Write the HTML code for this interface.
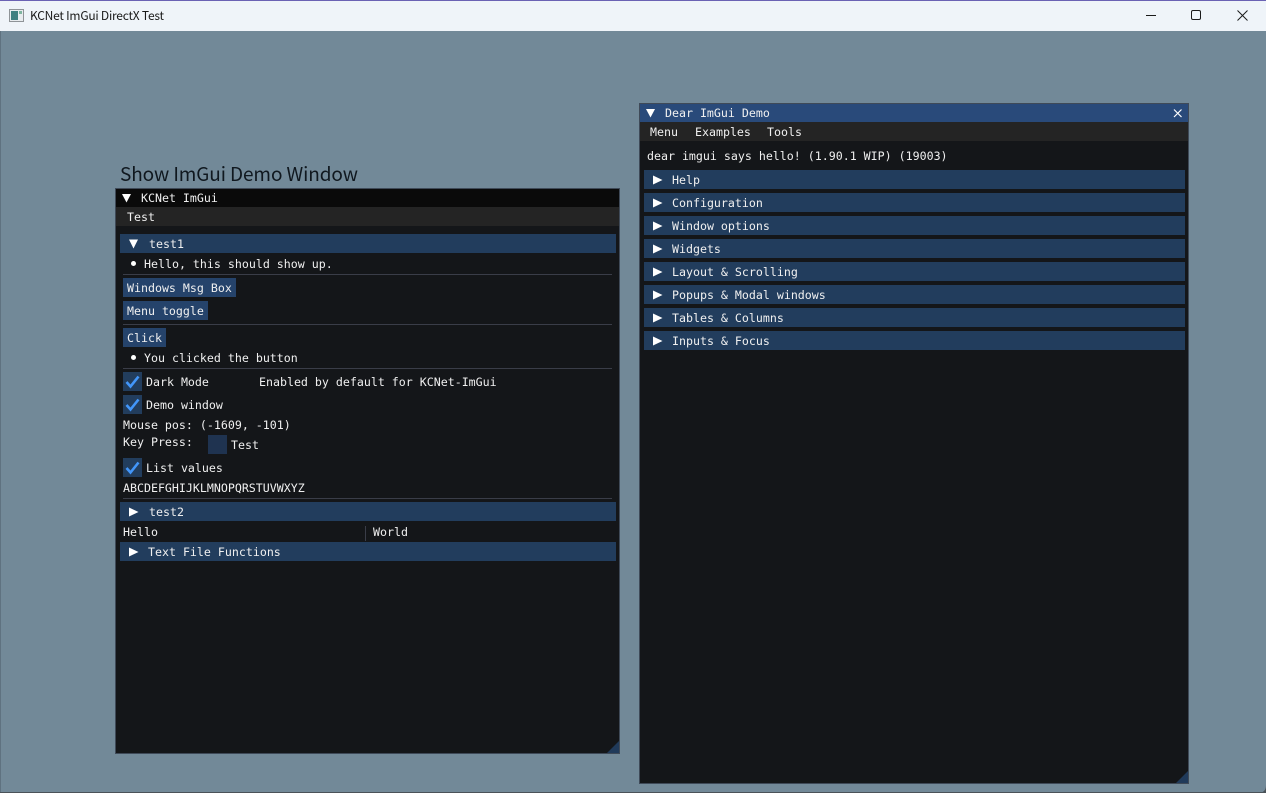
<!DOCTYPE html>
<html><head><meta charset="utf-8"><style>
html,body{margin:0;padding:0;width:1266px;height:793px;overflow:hidden;background:#728998}
div{position:absolute}
.t{white-space:pre;font:11.62px/14px "DejaVu Sans Mono",monospace;color:#f0f0f0}
.h{background:#223d5d}
.b{background:#25436b}
.s{background:#3a3d48;height:1px}
svg{position:absolute;left:0;top:0}
</style></head><body>
<div style="left:0;top:0;width:1266px;height:31px;background:#eff4f9"></div>
<div style="left:0;top:0;width:1266px;height:1px;background:#6a62b4"></div>
<div style="left:0;top:31px;width:1px;height:762px;background:#5f7280"></div>
<div style="left:0;top:792px;width:1266px;height:1px;background:#4a5258"></div>

<!-- window 1 -->
<div style="left:115px;top:188px;width:503px;height:564px;background:#141619;border:1px solid #3f4a58"></div>
<div style="left:116px;top:189px;width:503px;height:18px;background:#0a0a0a"></div>
<div style="left:116px;top:207px;width:503px;height:19px;background:#242424"></div>
<div class="t" style="left:141px;top:191px">KCNet ImGui</div>
<div class="t" style="left:127px;top:210px">Test</div>
<div class="h" style="left:120px;top:234px;width:496px;height:19px"></div>
<div class="t" style="left:149px;top:237px">test1</div>
<div class="t" style="left:144px;top:257px">Hello, this should show up.</div>
<div class="s" style="left:123px;top:274px;width:489px"></div>
<div class="b" style="left:123px;top:278px;width:113px;height:19px"></div>
<div class="t" style="left:127px;top:281px">Windows Msg Box</div>
<div class="b" style="left:123px;top:301px;width:85px;height:19px"></div>
<div class="t" style="left:127px;top:304px">Menu toggle</div>
<div class="s" style="left:123px;top:324px;width:489px"></div>
<div class="b" style="left:123px;top:328px;width:43px;height:19px"></div>
<div class="t" style="left:127px;top:331px">Click</div>
<div class="t" style="left:144px;top:351px">You clicked the button</div>
<div class="s" style="left:123px;top:368px;width:489px"></div>
<div class="h" style="left:123px;top:372px;width:19px;height:19px"></div>
<div class="t" style="left:146px;top:375px">Dark Mode</div>
<div class="t" style="left:259px;top:375px">Enabled by default for KCNet-ImGui</div>
<div class="h" style="left:123px;top:395px;width:19px;height:19px"></div>
<div class="t" style="left:146px;top:398px">Demo window</div>
<div class="t" style="left:123px;top:418px">Mouse pos: (-1609, -101)</div>
<div class="t" style="left:123px;top:435px">Key Press:</div>
<div style="left:208px;top:435px;width:19px;height:19px;background:#1f3350"></div>
<div class="t" style="left:231px;top:438px">Test</div>
<div class="h" style="left:123px;top:458px;width:19px;height:19px"></div>
<div class="t" style="left:146px;top:461px">List values</div>
<div class="t" style="left:123px;top:481px">ABCDEFGHIJKLMNOPQRSTUVWXYZ</div>
<div class="s" style="left:123px;top:498px;width:489px"></div>
<div class="h" style="left:120px;top:502px;width:496px;height:19px"></div>
<div class="t" style="left:149px;top:505px">test2</div>
<div class="t" style="left:123px;top:525px">Hello</div>
<div style="left:365px;top:526px;width:1px;height:15px;background:#3a3d48"></div>
<div class="t" style="left:373px;top:525px">World</div>
<div class="h" style="left:120px;top:542px;width:496px;height:19px"></div>
<div class="t" style="left:148px;top:545px">Text File Functions</div>

<!-- window 2 -->
<div style="left:639px;top:103px;width:548px;height:679px;background:#141619;border:1px solid #3f4a58"></div>
<div style="left:640px;top:104px;width:548px;height:18px;background:#294a7a"></div>
<div style="left:640px;top:122px;width:548px;height:19px;background:#242424"></div>
<div class="t" style="left:665px;top:106px">Dear ImGui Demo</div>
<div class="t" style="left:650px;top:125px">Menu</div>
<div class="t" style="left:695px;top:125px">Examples</div>
<div class="t" style="left:767px;top:125px">Tools</div>
<div class="t" style="left:647px;top:149px">dear imgui says hello! (1.90.1 WIP) (19003)</div>
<div class="h" style="left:644px;top:170px;width:541px;height:19px"></div>
<div class="t" style="left:672px;top:173px">Help</div>
<div class="h" style="left:644px;top:193px;width:541px;height:19px"></div>
<div class="t" style="left:672px;top:196px">Configuration</div>
<div class="h" style="left:644px;top:216px;width:541px;height:19px"></div>
<div class="t" style="left:672px;top:219px">Window options</div>
<div class="h" style="left:644px;top:239px;width:541px;height:19px"></div>
<div class="t" style="left:672px;top:242px">Widgets</div>
<div class="h" style="left:644px;top:262px;width:541px;height:19px"></div>
<div class="t" style="left:672px;top:265px">Layout &amp; Scrolling</div>
<div class="h" style="left:644px;top:285px;width:541px;height:19px"></div>
<div class="t" style="left:672px;top:288px">Popups &amp; Modal windows</div>
<div class="h" style="left:644px;top:308px;width:541px;height:19px"></div>
<div class="t" style="left:672px;top:311px">Tables &amp; Columns</div>
<div class="h" style="left:644px;top:331px;width:541px;height:19px"></div>
<div class="t" style="left:672px;top:334px">Inputs &amp; Focus</div>

<svg width="1266" height="793" viewBox="0 0 1266 793">
<text x="30" y="20" font-family="Noto Sans CJK JP, Liberation Sans, sans-serif" font-size="12" fill="#1a1a1a" textLength="134" lengthAdjust="spacing">KCNet ImGui DirectX Test</text>
<text x="120" y="181" font-family="Noto Sans CJK JP, Liberation Sans, sans-serif" font-size="19" fill="#10181f" textLength="238" lengthAdjust="spacing">Show ImGui Demo Window</text>
<!-- app icon -->
<rect x="9.500" y="9.500" width="14" height="12" fill="#e8ecef" stroke="#8f9498"/>
<rect x="11" y="11" width="7" height="9" fill="#3f7f80"/>
<rect x="19" y="11" width="3" height="3" fill="#7fb5a0"/>
<!-- window controls -->
<path d="M1146 15.500H1156" stroke="#1a1a1a" stroke-width="1"/>
<rect x="1191.500" y="10.500" width="9" height="9" rx="1.500" fill="none" stroke="#1a1a1a"/>
<path d="M1237.500 10.500L1247.500 20.500M1247.500 10.500L1237.500 20.500" stroke="#1a1a1a" stroke-width="1"/>
<!-- triangles down -->
<g fill="#fff">
<path d="M122 194H131L126.500 202.500Z"/>
<path d="M129 239.500H138L133.500 248.500Z"/>
<path d="M646 109H655L650.500 117.500Z"/>
<!-- triangles right -->
<path d="M129 507.500V516.500L138.500 512Z"/>
<path d="M129 547.500V556.500L138.500 552Z"/>
<path d="M653 175.500V184.500L662.500 180Z"/>
<path d="M653 198.500V207.500L662.500 203Z"/>
<path d="M653 221.500V230.500L662.500 226Z"/>
<path d="M653 244.500V253.500L662.500 249Z"/>
<path d="M653 267.500V276.500L662.500 272Z"/>
<path d="M653 290.500V299.500L662.500 295Z"/>
<path d="M653 313.500V322.500L662.500 318Z"/>
<path d="M653 336.500V345.500L662.500 341Z"/>
<circle cx="133.500" cy="263.500" r="2.500"/>
<circle cx="133.500" cy="357.500" r="2.500"/>
</g>
<!-- checks -->
<g fill="none" stroke="#4296fa" stroke-width="2.600">
<path d="M126.500 382L130.500 386.500L138.500 376.500"/>
<path d="M126.500 405L130.500 409.500L138.500 399.500"/>
<path d="M126.500 468L130.500 472.500L138.500 462.500"/>
</g>
<!-- close -->
<path d="M1174 109.500L1181.500 117M1181.500 109.500L1174 117" stroke="#fff" stroke-width="1.200"/>
<!-- grips -->
<path d="M619 741V753H607Z" fill="#203a5a"/>
<path d="M1188 771V783H1176Z" fill="#203a5a"/>
<!-- corner -->
<path d="M1266 785V793H1258Q1266 793 1266 785Z" fill="#4a5258"/>
</svg>
</body></html>
